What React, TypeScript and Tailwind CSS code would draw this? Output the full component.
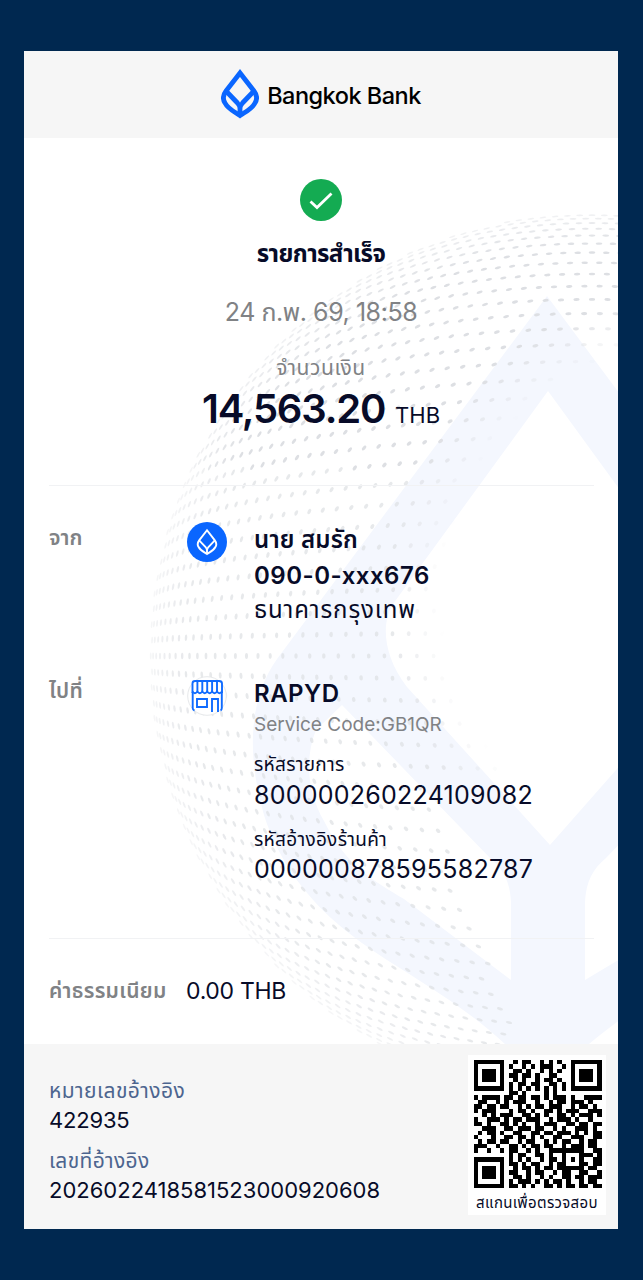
import type { ReactNode } from "react";
import clsx from "clsx";

const SPHERE = { cx: 568, cy: 518, r: 444 };

// dotted globe: a flat grid wrapped on a sphere, fading out towards the right
const dots = (() => {
	const out: { x: number; y: number; rx: number; ry: number; a: number; o: number }[] = [];
	for (let row = -32; row <= 32; row++) {
		for (let col = -42; col <= 14; col++) {
			const u = (col + (row % 2 ? 0.5 : 0)) * 18;
			const v = row * 23;
			const d = Math.hypot(u, v);
			const t = d / SPHERE.r;
			if (d === 0 || t > 1.48) continue;
			const k = (SPHERE.r * Math.sin(t)) / d;
			const x = SPHERE.cx + u * k;
			const y = SPHERE.cy + v * k;
			if (x > 598 || y > 910) continue;
			if (y > 640 && x > 415 + (y - 690) * 0.36) continue;
			const inner = Math.hypot(x - 676, y - 462);
			const fade = Math.min(1, Math.max(0, (inner - 258) / 50));
			if (fade === 0) continue;
			const edge = Math.min(1, Math.cos(t) * 2 + 0.2);
			const side = y < 330 ? 1 : 0.7;
			out.push({
				x,
				y,
				rx: 0.7 + 1.3 * Math.cos(t),
				ry: 1.7 + 1.7 * Math.sin(t),
				a: (Math.atan2(v, u) * 180) / Math.PI,
				o: fade * edge * side,
			});
		}
	}
	return out;
})();

const QR = [
	"#######..#.##..#.#.#..#######",
	"#.....#.#..#.#.###..#.#.....#",
	"#.###.#..##.#..#.#.#..#.###.#",
	"#.###.#.##.##.#..##...#.###.#",
	"#.###.#..#.#..#.##.#..#.###.#",
	"#.....#.#.##.##..##.#.#.....#",
	"#######.#.#.#.#.#.#.#.#######",
	"........##.#....#.#..........",
	"#.####.##.##.##.#.###.#..####",
	".##..#.#.###..#..#.##.###.#..",
	"##.##.##..#.#.##.###..#.##.#.",
	"#.###...#.##.#..##.#.###..###",
	"..#.#.###..##.#.#..##.#.###.#",
	"#..###.#.##.###..#.###.#..#..",
	"##.#..##.#.#..#.###..##.##.##",
	"..###..##.###.##..#.#..###.#.",
	".#.##.#..##..##.##.###.#.#.##",
	"#...#..##.##.#.#..##..###..##",
	".#.##.##..#.##..#.#.##..#.##.",
	"###..#..##.#.##.##..#.###.##.",
	"#..#..#.##..#.#..########..##",
	"........#.##..##.#..#...###.#",
	"#######.#.#.#..#.##.#.#.#..##",
	"#.....#.##.#.##..#.##...##.##",
	"#.###.#..#.##.#.##.######.##.",
	"#.###.#.##..#.##..#.##..##..#",
	"#.###.#..##.#..#.#..##.##.###",
	"#.....#.#.###.#.#.##.#..#.##.",
	"#######.##.#.#..##.#.##.##.##",
];

function Leaf({ className, width = 4.8 }: { className?: string; width?: number }) {
	return (
		<svg viewBox="0 0 38 50" fill="none" stroke="currentColor" strokeWidth={width} className={className}>
			<path d="M19 4 L5 22 C2 26 1.500 30 4 34 C7 40 13 42.500 19 46.500 C25 42.500 31 40 34 34 C36.500 30 36 26 33 22 Z" />
			<path d="M5 22 L16.500 34 C18.300 36 19 37.500 19 40 V46.500 M33 22 L21.500 34 C19.700 36 19 37.500 19 40" />
		</svg>
	);
}

function Backdrop() {
	return (
		<svg viewBox="0 0 594 906" className="absolute inset-0 h-full w-full">
			<path
				fill="#f4f7fe"
				fillRule="evenodd"
				d="M523 158 L253 521 C224 562 223 618 240 677 C254 722 284 765 330 799 C373 832 428 857 481 906 H565 C620 860 675 832 718 799 C900 650 830 560 793 521 Z
				M524 253 L369 466 C357 485 359 518 383 549 L526 707 L665 549 C689 518 691 485 679 466 Z
				M318 567 L292 592 C280 622 284 655 300 683 C322 728 350 743 380 761 L487 842 V764 C486 743 479 731 466 720 Z
				M730 567 L582 720 C569 731 562 743 561 764 V842 L668 778 C750 720 770 650 730 567 Z"
			/>
			{dots.map((d, i) => (
				<ellipse
					key={i}
					rx={d.rx}
					ry={d.ry}
					fill="#dddfe3"
					opacity={d.o}
					transform={`translate(${d.x.toFixed(1)} ${d.y.toFixed(1)}) rotate(${d.a.toFixed(1)})`}
				/>
			))}
		</svg>
	);
}

function StoreIcon() {
	return (
		<svg viewBox="0 0 40 40" fill="none" className="h-10 w-10">
			<circle cx="20" cy="20" r="19.300" fill="#fff" stroke="#e6e8ea" />
			<g stroke="#0f6bff" strokeWidth="1.900">
				<path d="M5.500 17 V7.500 Q5.500 5 8 5 H32 Q35 5 35 7.500 V17" />
				<path d="M5.500 15.500 q2.400 3.400 4.900 0 q2.400 3.400 4.900 0 q2.400 3.400 4.900 0 q2.400 3.400 4.900 0 q2.400 3.400 4.900 0 q2.400 3.400 4.900 0" />
				<path d="M10.400 5 V15.500 M15.300 5 V15.500 M20.200 5 V15.500 M25.100 5 V15.500 M30 5 V15.500" />
				<path d="M5.700 16 V32 Q5.700 34 7.500 34.500 M34.800 16 V32 Q34.800 34 33.500 34.500 M10 23 H20 V31 H10 Z M25 36 V23 H31 V36" />
			</g>
		</svg>
	);
}

function QrCode() {
	return (
		<svg viewBox="0 0 29 29" shapeRendering="crispEdges" className="h-[129px] w-[129px]">
			{QR.map((line, y) =>
				[...line].map((c, x) => c === "#" && <rect key={`${x}-${y}`} x={x} y={y} width="1" height="1" />),
			)}
		</svg>
	);
}

function Line({ className, children }: { className?: string; children: ReactNode }) {
	return <p className={clsx("whitespace-nowrap", className)}>{children}</p>;
}

export default function App() {
	return (
		<main className="h-[1280px] w-[643px] bg-[#002850] pt-[51px] pl-6 font-['Inter','Noto_Sans_Thai','Noto_Sans',sans-serif] text-[#070b28]">
			<div className="flex h-[1178px] w-[594px] flex-col bg-white">
				<header className="flex h-[87px] shrink-0 items-center justify-center gap-2 bg-[#f6f6f6] text-black">
					<Leaf className="-mt-0.5 h-[50px] w-[38px] text-[#0a66ff]" />
					<span className="mt-0.5 text-[23.500px] leading-8 font-medium tracking-[-0.5px]">Bangkok Bank</span>
				</header>

				<section className="relative h-[906px] overflow-hidden">
					<Backdrop />
					<div className="relative flex flex-col px-[25px] pt-[41px]">
						<div className="flex flex-col items-center">
							<svg viewBox="0 0 42 42" fill="none" className="h-[42px] w-[42px]">
								<circle cx="21" cy="21" r="21" fill="#14ab52" />
								<path d="M10.500 22.500 L17 28.500 L31.500 14.500" stroke="#fff" strokeWidth="2.800" />
							</svg>
							<Line className="mt-[15px] text-[24px] leading-9 font-bold tracking-[-0.6px]">รายการสำเร็จ</Line>
							<Line className="mt-[22px] text-[25px] leading-9 tracking-[-0.45px] text-[#808285]">24 ก.พ. 69, 18:58</Line>
							<Line className="mt-[22px] text-[21px] leading-8 tracking-[0.6px] text-[#808285]">จำนวนเงิน</Line>
							<div className="mt-px flex h-12 items-baseline gap-[10px] leading-[48px]">
								<span className="text-[40px] font-semibold tracking-[-1.2px]">14,563.20</span>
								<span className="text-[22px]">THB</span>
							</div>
						</div>

						<div className="mt-[52px] h-px w-[545px] bg-[#f1f2f4]" />

						<div className="mt-[36px] flex h-[154px]">
							<Line className="w-[138px] text-[21px] leading-8 font-semibold text-[#808285]">จาก</Line>
							<div className="flex h-10 w-10 items-center justify-center rounded-full bg-[#0a66ff]">
								<Leaf className="h-[28px] w-[22px] text-white" width={3.4} />
							</div>
							<div className="ml-[27px]">
								<Line className="text-[24px] leading-9 font-semibold tracking-[0.2px]">นาย สมรัก</Line>
								<Line className="text-[24px] leading-[35px] font-semibold tracking-[0.5px]">090-0-xxx676</Line>
								<Line className="text-[24px] leading-[34px] tracking-[0.9px]">ธนาคารกรุงเทพ</Line>
							</div>
						</div>

						<div className="flex h-[262px]">
							<Line className="w-[138px] text-[21px] leading-[30px] font-semibold tracking-[0.3px] text-[#808285]">ไปที่</Line>
							<StoreIcon />
							<div className="ml-[27px]">
								<Line className="text-[24px] leading-9 font-semibold tracking-[0.5px]">RAPYD</Line>
								<Line className="text-[19px] leading-[26px] text-[#808285]">Service Code:GB1QR</Line>
								<Line className="mt-3 text-[19px] leading-[30px] tracking-[0.3px]">รหัสรายการ</Line>
								<Line className="text-[25px] leading-[31px] tracking-[0.25px]">800000260224109082</Line>
								<Line className="mt-[14px] text-[19px] leading-[30px] tracking-[0.3px]">รหัสอ้างอิงร้านค้า</Line>
								<Line className="text-[25px] leading-[29px] tracking-[0.25px]">000000878595582787</Line>
							</div>
						</div>

						<div className="h-px w-[545px] bg-[#f1f2f4]" />

						<div className="mt-[34px] flex leading-9">
							<Line className="w-[137px] text-[21px] font-semibold tracking-[0.3px] text-[#808285]">ค่าธรรมเนียม</Line>
							<Line className="text-[23px] tracking-[-0.3px]">0.00 THB</Line>
						</div>
					</div>
				</section>

				<footer className="flex h-[185px] shrink-0 justify-between bg-[#f6f6f6] pr-3 pl-[25px]">
					<div className="pt-8">
						<Line className="text-[21px] leading-[30px] tracking-[0.45px] text-[#4d658f]">หมายเลขอ้างอิง</Line>
						<Line className="text-[22px] leading-7 tracking-[-0.2px]">422935</Line>
						<Line className="mt-3 text-[21px] leading-[30px] tracking-[0.35px] text-[#4d658f]">เลขที่อ้างอิง</Line>
						<Line className="text-[22px] leading-7">2026022418581523000920608</Line>
					</div>
					<div className="mt-[11px] flex h-[160px] w-[138px] flex-col items-center bg-white pt-[5px]">
						<QrCode />
						<Line className="mt-[3px] text-[15px] leading-6 tracking-[0.35px]">สแกนเพื่อตรวจสอบ</Line>
					</div>
				</footer>
			</div>
		</main>
	);
}
